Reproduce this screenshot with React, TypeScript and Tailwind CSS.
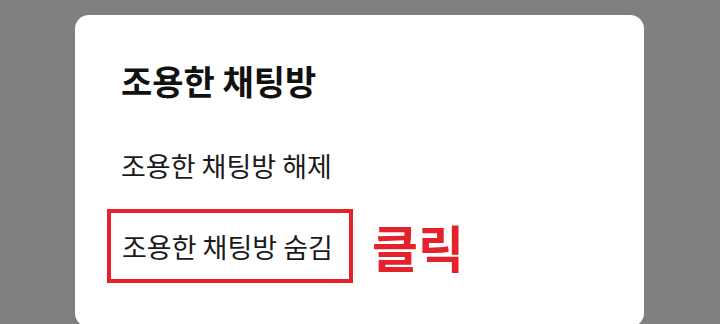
export default function App() {
  const font = { fontFamily: '"Noto Sans CJK KR", "Noto Sans", sans-serif' };
  return (
    <div
      className="w-[720px] h-[324px] bg-[#808080] overflow-hidden pt-[15px] pl-[75px]"
      style={font}
    >
      {/* Dialog */}
      <div className="w-[569px] h-[312px] bg-white rounded-[14px] pt-[49px] pl-[32px]">
        <h2 className="pl-[14px] text-[34px] leading-[34px] font-bold text-[#111111]">
          조용한 채팅방
        </h2>
        <p className="mt-[54px] pl-[14px] text-[27px] leading-[27px] text-[#1a1a1a]">
          조용한 채팅방 해제
        </p>
        <div className="mt-[30px] flex items-center">
          <div className="w-[246px] h-[74px] border-4 border-[#e5222c] pl-[11px] flex items-center">
            <span className="text-[27px] leading-[27px] text-[#1a1a1a] whitespace-nowrap">
              조용한 채팅방 숨김
            </span>
          </div>
          <span className="ml-[19px] text-[50px] leading-[50px] font-bold text-[#e5222c]">
            클릭
          </span>
        </div>
      </div>
    </div>
  );
}
